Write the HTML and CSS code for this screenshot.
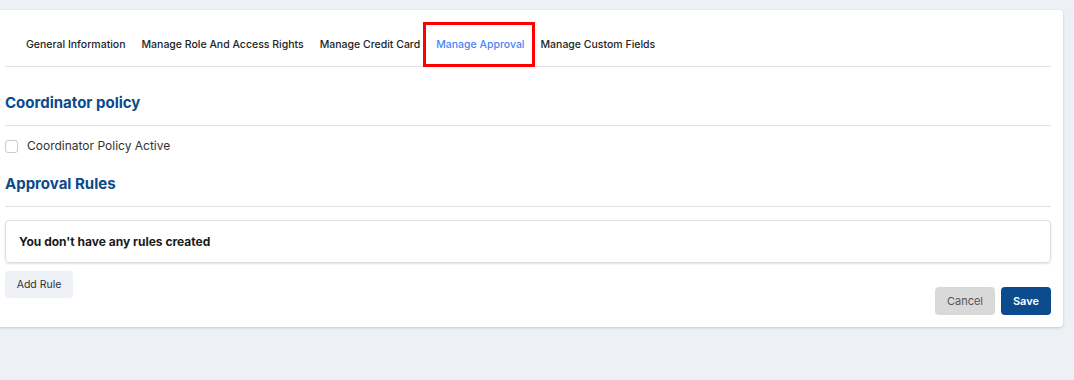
FILE: index.html
```html
<!DOCTYPE html>
<html lang="en">
<head>
<meta charset="utf-8">
<title>Manage Approval</title>
<link rel="stylesheet" href="styles.css">
</head>
<body>
<div class="card">
  <nav class="tabs">
    <a class="tab">General Information</a>
    <a class="tab">Manage Role And Access Rights</a>
    <a class="tab">Manage Credit Card</a>
    <a class="tab active">Manage Approval</a>
    <a class="tab">Manage Custom Fields</a>
  </nav>
  <h2 class="section-title">Coordinator policy</h2>
  <hr class="divider">
  <label class="check">
    <span class="box"></span>
    <span>Coordinator Policy Active</span>
  </label>
  <h2 class="section-title second">Approval Rules</h2>
  <hr class="divider">
  <div class="rules">You don't have any rules created</div>
  <div class="actions">
    <button class="btn light">Add Rule</button>
    <div class="footer">
      <button class="btn cancel">Cancel</button>
      <button class="btn save">Save</button>
    </div>
  </div>
</div>
</body>
</html>
```
FILE: styles.css
```css
* { box-sizing: border-box; }
html, body { margin: 0; }
body {
  background: #edf1f5;
  font-family: Inter, "Noto Sans", sans-serif;
  color: #212529;
  height: 380px;
  overflow: hidden;
}
.card {
  margin: 10px 11px 0 -10px;
  background: #fff;
  border-radius: 4px;
  box-shadow: 0 1px 3px rgba(0,0,0,0.18);
  padding: 12px 12px 12px 15px;
}
.tabs {
  display: flex;
  height: 45px;
  padding-left: 13px;
  border-bottom: 1px solid #dfe3e8;
  align-items: stretch;
}
.tab {
  position: relative;
  display: flex;
  align-items: center;
  padding: 0 8px;
  font-size: 10.5px;
  font-weight: 500;
  color: #212529;
}
.tab.active { color: #4a86f5; }
.tab.active::after {
  content: "";
  position: absolute;
  left: -5px;
  right: -2px;
  top: 0;
  bottom: -1px;
  border: 3px solid #f00;
}
.section-title {
  margin: 0;
  font-size: 15px;
  font-weight: 700;
  color: #0b4a8c;
  line-height: 20px;
  padding-top: 26px;
  padding-bottom: 12px;
}
.section-title.second { padding-top: 21px; }
.divider {
  margin: 0;
  border: 0;
  border-top: 1px solid #dfe3e8;
}
.check {
  display: flex;
  align-items: center;
  gap: 9px;
  margin-top: 13px;
  font-size: 12px;
  color: #333;
  line-height: 14px;
}
.box {
  width: 13px;
  height: 13px;
  border: 1px solid #c8ccd0;
  border-radius: 3px;
  background: #fff;
}
.rules {
  margin-top: 13px;
  height: 43px;
  border: 1px solid #dcdfe3;
  border-radius: 4px;
  box-shadow: 0 1px 2px rgba(0,0,0,0.12);
  padding: 0 13px;
  display: flex;
  align-items: center;
  font-size: 12px;
  font-weight: 700;
  color: #1a1a1a;
}
.actions {
  display: flex;
  justify-content: space-between;
  margin-top: 8px;
}
.btn {
  font-family: inherit;
  border: 0;
  border-radius: 4px;
  font-size: 11px;
  cursor: pointer;
}
.btn.light {
  align-self: flex-start;
  height: 27px;
  width: 68px;
  background: #edf1f5;
  color: #333;
  font-size: 10.5px;
}
.footer {
  display: flex;
  gap: 6px;
  margin-top: 16px;
}
.btn.cancel {
  height: 28px;
  width: 60px;
  background: #d9d9d9;
  color: #555;
}
.btn.save {
  height: 28px;
  width: 50px;
  background: #0b4a8c;
  color: #fff;
  font-weight: 600;
}
```
